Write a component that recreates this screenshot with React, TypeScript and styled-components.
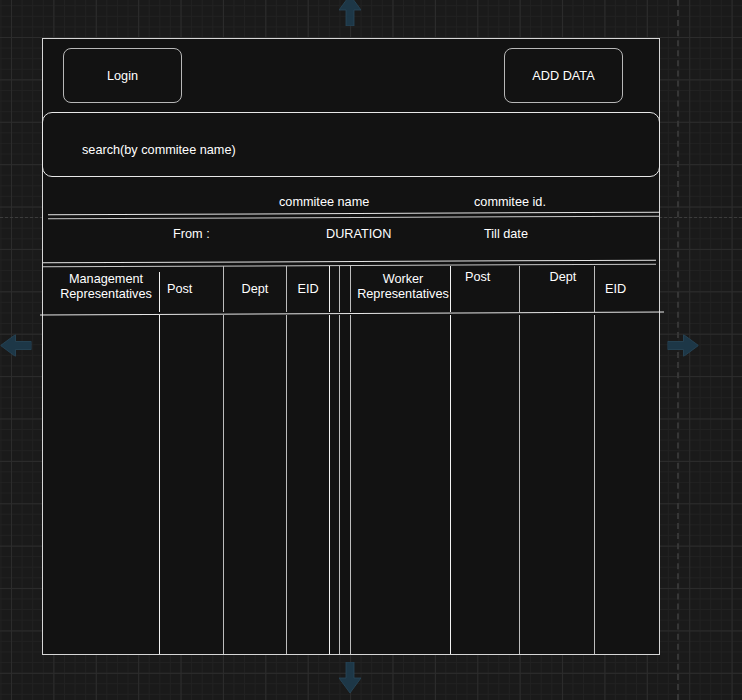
import styled, { createGlobalStyle } from 'styled-components';

const GlobalStyle = createGlobalStyle`
  html, body {
    margin: 0;
    padding: 0;
    background: #1a1a1a;
  }
  body {
    font-family: 'Liberation Sans', Arial, sans-serif;
  }
`;

type Col = {
  width: number;
  line?: string;
  label?: string[];
  justify?: string;
  alignY?: string;
  padL?: number;
  padT?: number;
  lineTop?: number;
};

const columns: Col[] = [
  { width: 117, line: '#f2f2f2', label: ['Management', 'Representatives'], justify: 'center', alignY: 'flex-start', padL: 10, padT: 6, lineTop: 6 },
  { width: 64, line: '#bdbdbd', label: ['Post'], justify: 'flex-start', alignY: 'center', padL: 7 },
  { width: 63, line: '#bdbdbd', label: ['Dept'], justify: 'center', alignY: 'center', padL: 0 },
  { width: 43, line: '#f2f2f2', label: ['EID'], justify: 'center', alignY: 'center' },
  { width: 10, line: '#bdbdbd' },
  { width: 11, line: '#bdbdbd' },
  { width: 100, line: '#f2f2f2', label: ['Worker', 'Representatives'], justify: 'center', alignY: 'flex-start', padL: 5, padT: 6 },
  { width: 69, line: '#bdbdbd', label: ['Post'], justify: 'flex-start', alignY: 'flex-start', padL: 14, padT: 4 },
  { width: 75, line: '#bdbdbd', label: ['Dept'], justify: 'center', alignY: 'flex-start', padL: 12, padT: 4 },
  { width: 64, label: ['EID'], justify: 'flex-start', alignY: 'center', padL: 10 },
];

const App = () => {
  return (
    <>
      <GlobalStyle />
      <Canvas>
        <PageBreakH />
        <PageBreakV />

        <Frame>
          <TopBar>
            <SketchButton>Login</SketchButton>
            <SketchButton>ADD DATA</SketchButton>
          </TopBar>

          <SearchBox>search(by commitee name)</SearchBox>

          <InfoRow $padL={236} $padT={18} $height={36}>
            <InfoCell $width={195}>commitee name</InfoCell>
            <InfoCell>commitee id.</InfoCell>
          </InfoRow>

          <DoubleRule $marginL={5} $marginR={-1} />

          <InfoRow $padL={130} $padT={9} $height={43}>
            <InfoCell $width={153}>From :</InfoCell>
            <InfoCell $width={158}>DURATION</InfoCell>
            <InfoCell>Till date</InfoCell>
          </InfoRow>

          <DoubleRule $marginL={0} $marginR={3} />

          <TableHead>
            {columns.map((c, i) => (
              <HeadCell
                key={i}
                $width={c.width}
                $line={c.line}
                $justify={c.justify}
                $alignY={c.alignY}
                $padL={c.padL}
                $padT={c.padT}
                $lineTop={c.lineTop}
              >
                {c.label && (
                  <HeadLabel>
                    {c.label.map((l) => (
                      <span key={l}>{l}</span>
                    ))}
                  </HeadLabel>
                )}
              </HeadCell>
            ))}
          </TableHead>
          <HeadRule />
          <TableBody>
            {columns.map((c, i) => (
              <BodyCell key={i} $width={c.width} $line={c.line} />
            ))}
          </TableBody>
        </Frame>

        <Arrow viewBox="0 0 22 31" $left={339} $top={-5} $rot={0}>
          <path d="M11 0 L22 15 L15 15 L15 31 L7 31 L7 15 L0 15 Z" />
        </Arrow>
        <Arrow viewBox="0 0 22 31" $left={339} $top={662} $rot={180}>
          <path d="M11 0 L22 15 L15 15 L15 31 L7 31 L7 15 L0 15 Z" />
        </Arrow>
        <Arrow viewBox="0 0 22 31" $left={5} $top={330} $rot={-90}>
          <path d="M11 0 L22 15 L15 15 L15 31 L7 31 L7 15 L0 15 Z" />
        </Arrow>
        <Arrow viewBox="0 0 22 31" $left={672} $top={330} $rot={90}>
          <path d="M11 0 L22 15 L15 15 L15 31 L7 31 L7 15 L0 15 Z" />
        </Arrow>
      </Canvas>
    </>
  );
};

export default App;

const Canvas = styled.div`
  position: relative;
  width: 742px;
  height: 700px;
  overflow: hidden;
  box-sizing: border-box;
  padding: 38px 0 0 42px;
  background-color: #1a1a1a;
  background-image:
    linear-gradient(#2c2c2c 1px, transparent 1px),
    linear-gradient(90deg, #2c2c2c 1px, transparent 1px),
    linear-gradient(#212121 1px, transparent 1px),
    linear-gradient(90deg, #212121 1px, transparent 1px);
  background-size: 42.4px 42.4px, 42.4px 42.4px, 10.6px 10.6px, 10.6px 10.6px;
  background-position: 11px 37px, 11px 37px, 11px 37px, 11px 37px;
`;

const PageBreakH = styled.div`
  position: absolute;
  left: 0;
  right: 0;
  top: 217px;
  border-top: 1px dashed #3c3c3c;
`;

const PageBreakV = styled.div`
  position: absolute;
  top: 0;
  bottom: 0;
  left: 677px;
  border-left: 2px dashed #363636;
`;

const Frame = styled.div`
  position: relative;
  z-index: 1;
  width: 618px;
  height: 617px;
  box-sizing: border-box;
  border: 1px solid #d6d6d6;
  background: #121212;
  display: flex;
  flex-direction: column;
  color: #ffffff;
  font-size: 12.7px;
  line-height: 14px;
`;

const TopBar = styled.div`
  height: 73px;
  box-sizing: border-box;
  padding: 9px 36px 0 20px;
  display: flex;
  justify-content: space-between;
  align-items: flex-start;
`;

const SketchButton = styled.div`
  width: 119px;
  height: 55px;
  box-sizing: border-box;
  border: 1px solid #b8b8b8;
  border-radius: 8px;
  display: flex;
  align-items: center;
  justify-content: center;
  color: #ffffff;
`;

const SearchBox = styled.div`
  height: 65px;
  margin: 0 -1px;
  box-sizing: border-box;
  border: 1px solid #e8e8e8;
  border-radius: 10px;
  padding: 30px 0 0 39px;
`;

const InfoRow = styled.div<{ $padL: number; $padT: number; $height: number }>`
  height: ${(p) => p.$height}px;
  box-sizing: border-box;
  padding: ${(p) => p.$padT}px 0 0 ${(p) => p.$padL}px;
  display: flex;
`;

const InfoCell = styled.div<{ $width?: number }>`
  width: ${(p) => (p.$width ? `${p.$width}px` : 'auto')};
  flex-shrink: 0;
  white-space: nowrap;
`;

const DoubleRule = styled.div<{ $marginL: number; $marginR: number }>`
  height: 5px;
  box-sizing: border-box;
  margin: 0 ${(p) => p.$marginR}px 0 ${(p) => p.$marginL}px;
  border-top: 1px solid #e4e4e4;
  border-bottom: 1px solid #c9c9c9;
  transform: rotate(-0.25deg);
`;

const TableHead = styled.div`
  height: 46px;
  display: flex;
`;

const HeadCell = styled.div<{
  $width: number;
  $line?: string;
  $justify?: string;
  $alignY?: string;
  $padL?: number;
  $padT?: number;
  $lineTop?: number;
}>`
  position: relative;
  width: ${(p) => p.$width}px;
  flex-shrink: 0;
  box-sizing: border-box;
  display: flex;
  justify-content: ${(p) => p.$justify || 'center'};
  align-items: ${(p) => p.$alignY || 'center'};
  padding: ${(p) => p.$padT || 0}px 0 0 ${(p) => p.$padL || 0}px;
  border-right: ${(p) => (p.$line ? `1px solid ${p.$line}` : 'none')};
  ${(p) =>
    p.$lineTop
      ? `
    border-right-color: transparent;
    &::after {
      content: '';
      position: absolute;
      right: -1px;
      top: ${p.$lineTop}px;
      bottom: 0;
      border-right: 1px solid ${p.$line};
    }
  `
      : ''}
`;

const HeadLabel = styled.div`
  display: flex;
  flex-direction: column;
  align-items: center;
  text-align: center;
  line-height: 15px;
  white-space: nowrap;
`;

const HeadRule = styled.div`
  height: 0;
  margin: 1px -5px 1px -3px;
  border-top: 1px solid #e6e6e6;
  transform: rotate(-0.28deg);
`;

const TableBody = styled.div`
  flex: 1;
  display: flex;
`;

const BodyCell = styled.div<{ $width: number; $line?: string }>`
  width: ${(p) => p.$width}px;
  flex-shrink: 0;
  box-sizing: border-box;
  border-right: ${(p) => (p.$line ? `1px solid ${p.$line}` : 'none')};
`;

const Arrow = styled.svg<{ $left: number; $top: number; $rot: number }>`
  position: absolute;
  z-index: 2;
  left: ${(p) => p.$left}px;
  top: ${(p) => p.$top}px;
  width: 22px;
  height: 31px;
  transform: rotate(${(p) => p.$rot}deg);
  fill: #1d3747;
  stroke: #28475a;
  stroke-width: 0.8;
`;
